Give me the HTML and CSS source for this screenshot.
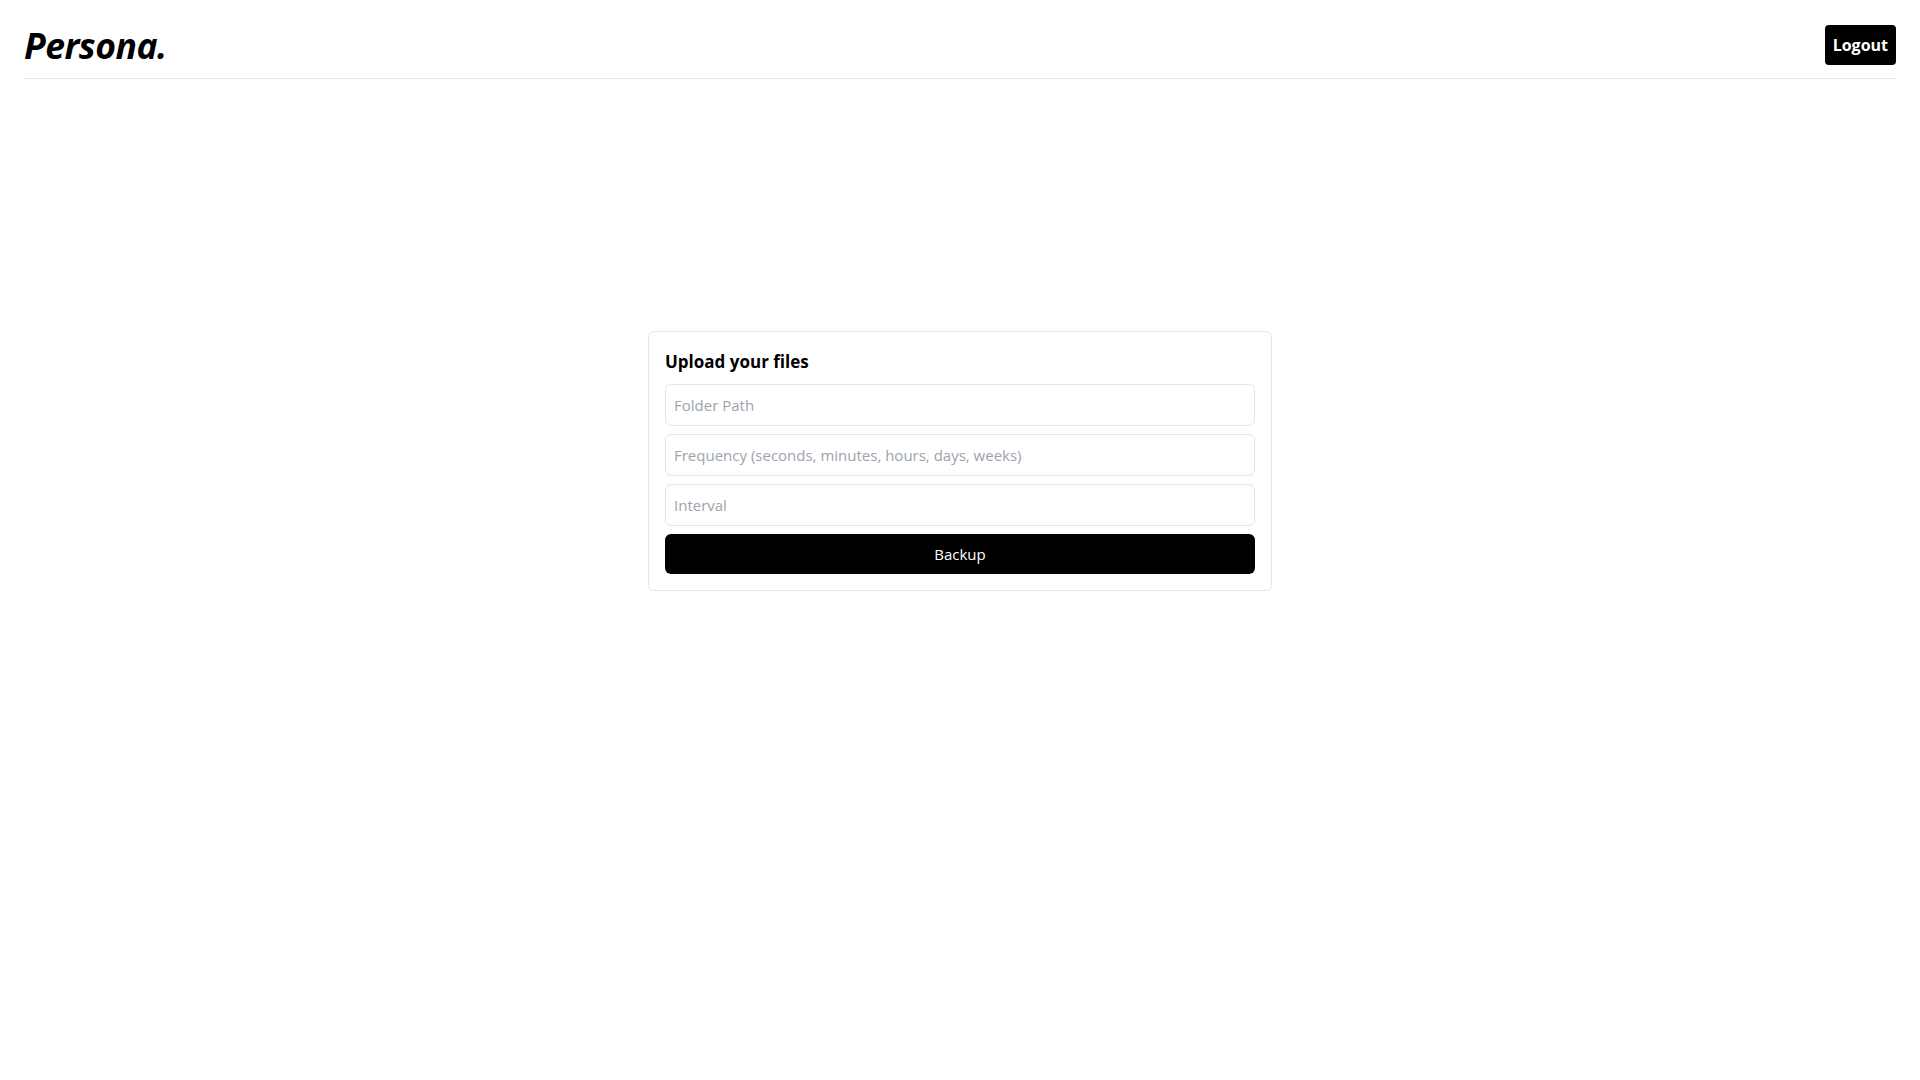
FILE: index.html
```html
<!DOCTYPE html>
<html lang="en">
<head>
    <meta charset="UTF-8">
    <meta name="viewport" content="width=device-width, initial-scale=1.0">
    <title>Persona</title>
    <link rel="stylesheet" href="styles.css">
</head>
<body>
    <!-- Top bar -->
    <header class="topbar">
        <div class="logo">Persona.</div>
        <button class="logout-btn" type="button">Logout</button>
    </header>

    <!-- Upload form -->
    <main class="main">
        <div class="card">
            <h2 class="card-title">Upload your files</h2>
            <form class="upload-form">
                <input type="text" name="folder_path" placeholder="Folder Path">
                <input type="text" name="frequency" placeholder="Frequency (seconds, minutes, hours, days, weeks)">
                <input type="text" name="interval" placeholder="Interval">
                <button type="submit" class="backup-btn">Backup</button>
            </form>
        </div>
    </main>
</body>
</html>
```

FILE: styles.css
```css
body {
    margin: 0;
    padding: 0;
    font-family: "Open Sans", "Noto Sans", sans-serif;
    background-color: #ffffff;
    color: #000000;
}

.topbar {
    display: flex;
    align-items: center;
    justify-content: space-between;
    margin: 0 24px;
    padding: 25px 0 13px;
    border-bottom: 1px solid #e5e5e5;
    height: 40px;
}

.logo {
    font-size: 35.5px;
    font-weight: 700;
    font-style: italic;
    letter-spacing: -0.5px;
}

.logout-btn {
    height: 40px;
    padding: 0 8px;
    border: none;
    border-radius: 4px;
    background-color: #000;
    color: #fff;
    font-family: inherit;
    font-size: 16px;
    font-weight: 700;
    cursor: pointer;
}

.main {
    display: flex;
    justify-content: center;
    padding-top: 252px;
}

.card {
    width: 590px;
    padding: 16px;
    border: 1px solid #e5e5e5;
    border-radius: 6px;
}

.card-title {
    margin: 0 0 8px;
    font-size: 17px;
    font-weight: 700;
    line-height: 28px;
}

.upload-form {
    display: flex;
    flex-direction: column;
    gap: 8px;
}

.upload-form input {
    height: 42px;
    box-sizing: border-box;
    padding: 0 8px;
    border: 1px solid #e5e5e5;
    border-radius: 6px;
    font-family: inherit;
    font-size: 15px;
    color: #111;
    outline: none;
}

.upload-form input::placeholder {
    color: #9ca3af;
}

.backup-btn {
    height: 40px;
    border: none;
    border-radius: 6px;
    background-color: #000;
    color: #fff;
    font-family: inherit;
    font-size: 15px;
    cursor: pointer;
}
```
